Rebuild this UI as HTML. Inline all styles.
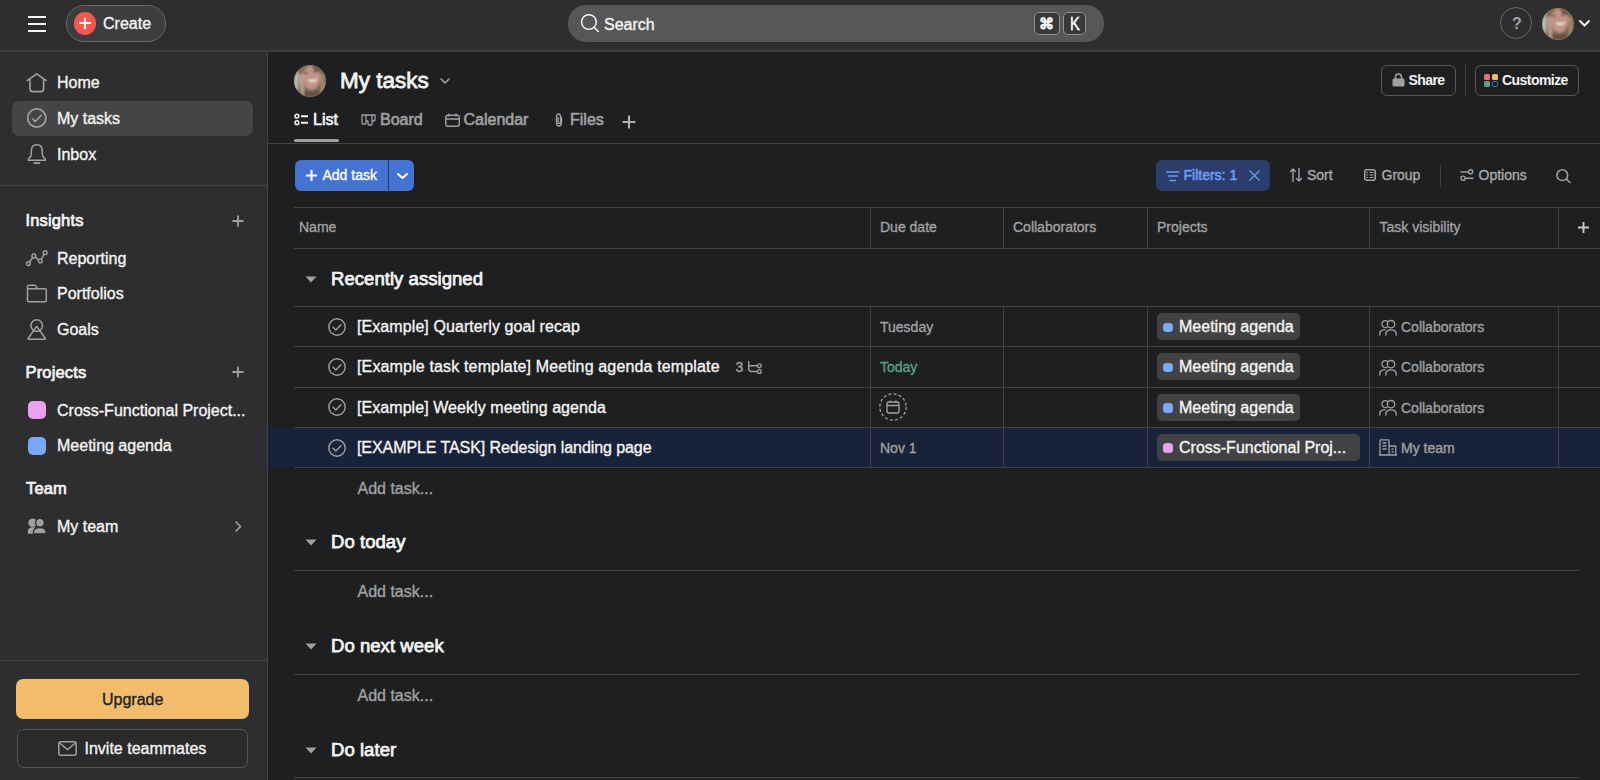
<!DOCTYPE html>
<html><head><meta charset="utf-8">
<style>
*{box-sizing:border-box;margin:0;padding:0}
html,body{width:1600px;height:780px;overflow:hidden;background:#1e1f21;font-family:"Liberation Sans",sans-serif;color:#f5f4f3}
.a{position:absolute}
.t{position:absolute;line-height:1;white-space:nowrap;-webkit-text-stroke:0.35px currentColor}
.b{font-weight:700}
.g{color:#a2a0a2}
#top{left:0;top:0;width:1600px;height:51px;background:#2e2e30}
#topline{left:0;top:50px;width:1600px;height:2px;background:#3c3c3e}
#side{left:0;top:52px;width:267px;height:728px;background:#2e2e30}
#sideline{left:267px;top:52px;width:1px;height:728px;background:#424244}
.hl{background:#424244}
.ln{position:absolute;height:1px;background:#424244}
.vl{position:absolute;width:1px;background:#424244}
svg{position:absolute;overflow:visible}
</style></head><body>
<!-- TOP BAR -->
<div id="top" class="a"></div>
<div id="topline" class="a"></div>
<!-- hamburger -->
<div class="a" style="left:28px;top:16px;width:18px;height:2px;background:#f5f4f3"></div>
<div class="a" style="left:28px;top:22.5px;width:18px;height:2px;background:#f5f4f3"></div>
<div class="a" style="left:28px;top:29.5px;width:18px;height:2px;background:#f5f4f3"></div>
<!-- create -->
<div class="a" style="left:66px;top:5px;width:99.5px;height:36.5px;border-radius:18px;background:#3d3d3f;border:1.5px solid #68676a"></div>
<div class="a" style="left:73.5px;top:12px;width:22.5px;height:22.5px;border-radius:50%;background:#f25a4f"></div>
<div class="a" style="left:79px;top:22.3px;width:11.5px;height:2px;background:#fff"></div>
<div class="a" style="left:83.8px;top:17.5px;width:2px;height:11.5px;background:#fff"></div>
<div class="t" style="left:103px;top:16.45px;font-size:16px">Create</div>
<!-- search -->
<div class="a" style="left:568px;top:5px;width:536px;height:36.5px;border-radius:18px;background:#575658"></div>
<svg style="left:580px;top:13px" width="20" height="20" viewBox="0 0 20 20"><circle cx="8.9" cy="9" r="7.3" fill="none" stroke="#f5f4f3" stroke-width="1.5"/><path d="M14 14.3 L18.3 18.5" stroke="#f5f4f3" stroke-width="1.6" stroke-linecap="round"/></svg>
<div class="t" style="left:604px;top:16.70px;font-size:16px">Search</div>
<div class="a" style="left:1034px;top:12px;width:25.5px;height:23px;border-radius:5px;background:#39393b;border:1.7px solid #929193"></div>
<div class="t" style="left:1039px;top:15.5px;font-size:15px;font-weight:700;width:15px;text-align:center">&#8984;</div>
<div class="a" style="left:1063px;top:12px;width:23px;height:23px;border-radius:5px;background:#39393b;border:1.7px solid #929193"></div>
<div class="t" style="left:1070.3px;top:15px;font-size:18px;transform:scaleX(0.82);transform-origin:0 0;-webkit-text-stroke:0.7px #f5f4f3">K</div>
<!-- help -->
<div class="a" style="left:1500px;top:7px;width:32px;height:32px;border-radius:50%;border:1.5px solid #6a696b"></div>
<div class="t g b" style="left:1512px;top:16px;font-size:16px;-webkit-text-stroke:0">?</div>
<!-- avatar top -->
<svg id="av1" style="left:1542px;top:7.5px" width="32" height="32" viewBox="0 0 32 32"><use href="#avatar"/></svg>
<svg style="left:1579px;top:20px" width="11" height="7" viewBox="0 0 11 7"><path d="M1 1 L5.5 5.5 L10 1" fill="none" stroke="#f5f4f3" stroke-width="2" stroke-linecap="round" stroke-linejoin="round"/></svg>

<!-- SIDEBAR -->
<div id="side" class="a"></div>
<div id="sideline" class="a"></div>
<div class="a hl" style="left:12px;top:101px;width:241px;height:35px;border-radius:7px;background:#454547"></div>
<!-- home icon -->
<svg style="left:26px;top:73px" width="22" height="20" viewBox="0 0 22 20"><path d="M1.2 7.6 L10.7 0.8 L20.2 7.6 M4 6 V15.5 Q4 18.6 7 18.6 H14.6 Q17.6 18.6 17.6 15.5 V6" fill="none" stroke="#a2a0a2" stroke-width="1.6" stroke-linejoin="round" stroke-linecap="round"/></svg>
<div class="t" style="left:57px;top:75px;font-size:16px">Home</div>
<svg style="left:27px;top:108.3px" width="20" height="20" viewBox="0 0 20 20"><circle cx="9.8" cy="10" r="9.1" fill="none" stroke="#a2a0a2" stroke-width="1.7"/><path d="M5.5 10.8 L8.3 13.6 L14.2 7.2" fill="none" stroke="#a2a0a2" stroke-width="1.5" stroke-linecap="round" stroke-linejoin="round"/></svg>
<div class="t" style="left:57px;top:111px;font-size:16px">My tasks</div>
<svg style="left:27px;top:143.5px" width="20" height="21" viewBox="0 0 20 21"><path d="M1.3 16.2 Q1 15 2.2 14.2 Q4.3 12.6 4.3 9.5 V7.5 Q4.3 0.8 9.8 0.8 Q15.3 0.8 15.3 7.5 V9.5 Q15.3 12.6 17.4 14.2 Q18.6 15 18.3 16.2 Z" fill="none" stroke="#a2a0a2" stroke-width="1.5" stroke-linejoin="round"/><path d="M7.3 19.2 H12.3" stroke="#a2a0a2" stroke-width="1.8" stroke-linecap="round"/></svg>
<div class="t" style="left:57px;top:147px;font-size:16px">Inbox</div>
<div class="ln" style="left:0;top:185px;width:267px"></div>

<div class="t b" style="left:25.5px;top:212px;font-size:16.5px;letter-spacing:0.15px;font-weight:400;-webkit-text-stroke:0.7px currentColor">Insights</div>
<svg style="left:232px;top:214.5px" width="12" height="12" viewBox="0 0 12 12"><path d="M6 0.5 V11.5 M0.5 6 H11.5" stroke="#a2a0a2" stroke-width="1.8"/></svg>
<svg style="left:26px;top:250px" width="22" height="16" viewBox="0 0 22 16"><path d="M3.5 12 L6.8 7.4 M9.2 7.3 L13.1 10.1 M15.3 9.4 L18.1 4.2" fill="none" stroke="#a2a0a2" stroke-width="1.5"/><circle cx="2.4" cy="13.6" r="1.9" fill="none" stroke="#a2a0a2" stroke-width="1.4"/><circle cx="7.9" cy="5.9" r="1.9" fill="none" stroke="#a2a0a2" stroke-width="1.4"/><circle cx="14.3" cy="11" r="1.9" fill="none" stroke="#a2a0a2" stroke-width="1.4"/><circle cx="19.1" cy="2.7" r="1.9" fill="none" stroke="#a2a0a2" stroke-width="1.4"/></svg>
<div class="t" style="left:57px;top:251.15px;font-size:16px">Reporting</div>
<svg style="left:26px;top:284px" width="22" height="19" viewBox="0 0 22 19"><path d="M1.5 16.5 V2.5 Q1.5 1.2 2.8 1.2 H8.6 Q9.3 1.2 9.8 1.9 L11.5 4.8 H19 Q20.3 4.8 20.3 6.1 V16.5 Q20.3 17.8 19 17.8 H2.8 Q1.5 17.8 1.5 16.5 Z M1.5 4.8 H11.5" fill="none" stroke="#a2a0a2" stroke-width="1.5" stroke-linejoin="round"/></svg>
<div class="t" style="left:57px;top:286px;font-size:16px">Portfolios</div>
<svg style="left:27px;top:318.5px" width="20" height="22" viewBox="0 0 20 22"><circle cx="9.7" cy="6.6" r="5.8" fill="none" stroke="#a2a0a2" stroke-width="1.5"/><path d="M9.7 7.4 L1.3 19 Q0.6 20.3 2.1 20.3 H17.3 Q18.8 20.3 18.1 19 Z" fill="none" stroke="#a2a0a2" stroke-width="1.5" stroke-linejoin="round"/></svg>
<div class="t" style="left:57px;top:322.35px;font-size:16px">Goals</div>

<div class="t b" style="left:25.5px;top:364px;font-size:16.5px;letter-spacing:0.15px;font-weight:400;-webkit-text-stroke:0.7px currentColor">Projects</div>
<svg style="left:232px;top:366px" width="12" height="12" viewBox="0 0 12 12"><path d="M6 0.5 V11.5 M0.5 6 H11.5" stroke="#a2a0a2" stroke-width="1.8"/></svg>
<div class="a" style="left:28px;top:401px;width:18px;height:18px;border-radius:5px;background:#e8a2ee"></div>
<div class="t" style="left:57px;top:403.05px;font-size:16px">Cross-Functional Project...</div>
<div class="a" style="left:28px;top:437px;width:18px;height:18px;border-radius:5px;background:#78a8f8"></div>
<div class="t" style="left:57px;top:438px;font-size:16px">Meeting agenda</div>

<div class="t b" style="left:26px;top:480.4px;font-size:16.5px;letter-spacing:0.15px;font-weight:400;-webkit-text-stroke:0.7px currentColor">Team</div>
<svg style="left:27px;top:517px" width="21" height="18" viewBox="0 0 21 18"><circle cx="5.6" cy="5.7" r="4.3" fill="#a2a0a2"/><path d="M0.8 16.8 V15 Q0.8 10.2 5.6 10.2 Q8.5 10.2 10 11.5 V16.8 Z" fill="#a2a0a2"/><circle cx="12.9" cy="5.7" r="4.3" fill="#a2a0a2" stroke="#2e2e30" stroke-width="1.3"/><path d="M6.5 16.8 V15.3 Q6.5 10.6 12.9 10.6 Q19.1 10.6 19.1 15.3 V16.8 Z" fill="#a2a0a2" stroke="#2e2e30" stroke-width="1.3"/></svg>
<div class="t" style="left:57px;top:518.95px;font-size:16px">My team</div>
<svg style="left:234.5px;top:521px" width="7" height="11" viewBox="0 0 7 11"><path d="M1 1 L5.5 5.5 L1 10" fill="none" stroke="#a2a0a2" stroke-width="1.6" stroke-linecap="round" stroke-linejoin="round"/></svg>

<div class="ln" style="left:0;top:660px;width:267px"></div>
<div class="a" style="left:16px;top:679px;width:233px;height:40px;border-radius:7px;background:#f1bd6c"></div>
<div class="t" style="left:102px;top:692.20px;font-size:16px;color:#1e1f21">Upgrade</div>
<div class="a" style="left:17px;top:728.5px;width:231px;height:39.5px;border-radius:7px;border:1px solid #545456;background:#2a2a2c"></div>
<svg style="left:58px;top:741px" width="19" height="15" viewBox="0 0 19 15"><rect x="0.8" y="0.8" width="17.4" height="13.4" rx="2" fill="none" stroke="#a2a0a2" stroke-width="1.5"/><path d="M1.5 2 L9.5 8.5 L17.5 2" fill="none" stroke="#a2a0a2" stroke-width="1.5"/></svg>
<div class="t" style="left:84.5px;top:741px;font-size:16px">Invite teammates</div>

<!-- MAIN HEADER -->
<svg style="left:294px;top:64.5px" width="32" height="32" viewBox="0 0 32 32"><use href="#avatar"/></svg>
<div class="t b" style="left:340px;top:70px;font-size:22.5px;letter-spacing:0px;font-weight:400;-webkit-text-stroke:0.8px currentColor">My tasks</div>
<svg style="left:439.5px;top:77.5px" width="10" height="6" viewBox="0 0 10 6"><path d="M1 1 L5 5 L9 1" fill="none" stroke="#a2a0a2" stroke-width="1.6" stroke-linecap="round" stroke-linejoin="round"/></svg>

<div class="a" style="left:1380.5px;top:65px;width:75px;height:31px;border-radius:6px;border:1px solid #565557"></div>
<svg style="left:1391.5px;top:73px" width="13" height="14" viewBox="0 0 13 14"><path d="M3.5 6 V4.5 Q3.5 1 6.5 1 Q9.5 1 9.5 4.5 V6" fill="none" stroke="#a2a0a2" stroke-width="1.6"/><rect x="0.5" y="5.5" width="12" height="8" rx="1.5" fill="#a2a0a2"/></svg>
<div class="t b" style="left:1408.5px;top:73px;font-size:14px;letter-spacing:-0.6px;-webkit-text-stroke:0">Share</div>
<div class="vl" style="left:1465px;top:65px;height:31px"></div>
<div class="a" style="left:1474.5px;top:65px;width:104px;height:31px;border-radius:6px;border:1px solid #565557"></div>
<div class="a" style="left:1484px;top:73.5px;width:6px;height:6px;border-radius:1.5px;background:#f06a6a"></div>
<div class="a" style="left:1492px;top:73.5px;width:6px;height:6px;border-radius:1.5px;background:#f1bd6c"></div>
<div class="a" style="left:1484px;top:81px;width:6px;height:6px;border-radius:1.5px;background:#5da283"></div>
<div class="a" style="left:1492px;top:81px;width:6px;height:6px;border-radius:1.5px;border:1.5px solid #4573d2"></div>
<div class="t b" style="left:1502px;top:73px;font-size:14px;letter-spacing:-0.55px;-webkit-text-stroke:0">Customize</div>

<!-- tabs -->
<svg style="left:294px;top:114px" width="15" height="11" viewBox="0 0 15 11"><circle cx="2.9" cy="2.2" r="1.9" fill="none" stroke="#f5f4f3" stroke-width="1.5"/><circle cx="2.9" cy="8.7" r="1.9" fill="none" stroke="#f5f4f3" stroke-width="1.5"/><path d="M7 2.2 H14 M7 8.7 H14" stroke="#f5f4f3" stroke-width="1.9"/></svg>
<div class="t" style="left:313px;top:112.45px;font-size:16px;-webkit-text-stroke:0.65px currentColor">List</div>
<div class="a" style="left:294px;top:139px;width:45px;height:3px;border-radius:1.5px;background:#a2a0a2"></div>
<svg style="left:361px;top:113.5px" width="15" height="12" viewBox="0 0 15 12"><path d="M1 1 H14 V6 Q14 7 13 7 H11 V10 Q11 11 10 11 H8 Q7 11 7 10 V7 H5 V9 Q5 10 4 10 H2 Q1 10 1 9 Z M5 1 V7 M11 1 V7" fill="none" stroke="#a2a0a2" stroke-width="1.3" stroke-linejoin="round"/></svg>
<div class="t g" style="left:380px;top:112.45px;font-size:16px;-webkit-text-stroke:0.6px currentColor">Board</div>
<svg style="left:444.5px;top:112.5px" width="15" height="14" viewBox="0 0 15 14"><rect x="0.8" y="2.3" width="13.4" height="11" rx="2" fill="none" stroke="#a2a0a2" stroke-width="1.4"/><path d="M0.8 6 H14.2 M4 0.5 V3.5 M11 0.5 V3.5" stroke="#a2a0a2" stroke-width="1.4"/></svg>
<div class="t g" style="left:463.5px;top:112.45px;font-size:16px;-webkit-text-stroke:0.6px currentColor">Calendar</div>
<svg style="left:553.5px;top:112.5px" width="10" height="14" viewBox="0 0 10 14"><path d="M7.5 4.5 V10 Q7.5 13 5 13 Q2.5 13 2.5 10 V3.5 Q2.5 1 4.5 1 Q6.5 1 6.5 3.5 V9.5 Q6.5 10.5 5 10.5 Q4 10.5 4 9.5 V4.5" fill="none" stroke="#a2a0a2" stroke-width="1.3" stroke-linecap="round"/></svg>
<div class="t g" style="left:570px;top:112.45px;font-size:16px;-webkit-text-stroke:0.6px currentColor">Files</div>
<svg style="left:621.5px;top:115px" width="14" height="14" viewBox="0 0 14 14"><path d="M7 0.5 V13.5 M0.5 7 H13.5" stroke="#b0aeb0" stroke-width="2.1"/></svg>
<div class="ln" style="left:268px;top:143px;width:1332px"></div>

<!-- toolbar -->
<div class="a" style="left:294.5px;top:159.5px;width:119px;height:31.5px;border-radius:6px;background:#4573d2"></div>
<div class="a" style="left:387.5px;top:159.5px;width:1px;height:31.5px;background:#1e1f21;opacity:.7"></div>
<svg style="left:306px;top:169.5px" width="11" height="11" viewBox="0 0 11 11"><path d="M5.5 0 V11 M0 5.5 H11" stroke="#fff" stroke-width="2.1"/></svg>
<div class="t" style="left:322.5px;top:168px;font-size:14px;color:#fff">Add task</div>
<svg style="left:396.5px;top:172.5px" width="11" height="6" viewBox="0 0 11 6"><path d="M1 1 L5.5 5 L10 1" fill="none" stroke="#fff" stroke-width="2" stroke-linecap="round" stroke-linejoin="round"/></svg>

<div class="a" style="left:1155.5px;top:159.5px;width:114.5px;height:31.5px;border-radius:6px;background:#2c3d6b"></div>
<svg style="left:1165.5px;top:170.5px" width="14" height="11" viewBox="0 0 14 11"><path d="M0.3 1 H13.5 M2 5 H11.8 M3.5 9.5 H10" stroke="#6a9bf7" stroke-width="1.3"/></svg>
<div class="t" style="left:1183.5px;top:168px;font-size:14px;color:#6d9ef8;-webkit-text-stroke:0.55px #6d9ef8">Filters: 1</div>
<svg style="left:1248.5px;top:170px" width="11" height="11" viewBox="0 0 11 11"><path d="M0.5 0.5 L10.5 10.5 M10.5 0.5 L0.5 10.5" stroke="#6d9ef8" stroke-width="1.2"/></svg>

<svg style="left:1290px;top:168px" width="12" height="14" viewBox="0 0 12 14"><path d="M3 13.5 V1 M0.5 3.5 L3 1 L5.5 3.5 M9 0.5 V13 M6.5 10.5 L9 13 L11.5 10.5" fill="none" stroke="#a2a0a2" stroke-width="1.4" stroke-linecap="round" stroke-linejoin="round"/></svg>
<div class="t" style="left:1307px;top:168px;font-size:14px;color:#aba9ab">Sort</div>
<svg style="left:1364px;top:169px" width="12" height="12" viewBox="0 0 12 12"><rect x="0.75" y="0.75" width="10.5" height="10.5" rx="2" fill="none" stroke="#a2a0a2" stroke-width="1.5"/><path d="M2.5 3.5 H4 M5.5 3.5 H9.5 M2.5 6 H4 M5.5 6 H9.5 M2.5 8.5 H4 M5.5 8.5 H9.5" stroke="#a2a0a2" stroke-width="1"/></svg>
<div class="t" style="left:1381.5px;top:168px;font-size:14px;color:#aba9ab">Group</div>
<div class="vl" style="left:1440px;top:164.5px;height:22px"></div>
<svg style="left:1460px;top:169px" width="14" height="12" viewBox="0 0 14 12"><path d="M0.5 3 H8 M5.5 9.2 H13.5" stroke="#a2a0a2" stroke-width="1.4"/><circle cx="10.6" cy="2.8" r="2.1" fill="none" stroke="#a2a0a2" stroke-width="1.4"/><circle cx="3" cy="9.2" r="2.1" fill="none" stroke="#a2a0a2" stroke-width="1.4"/></svg>
<div class="t" style="left:1478.5px;top:168px;font-size:14px;color:#aba9ab">Options</div>
<svg style="left:1556px;top:169px" width="15" height="14" viewBox="0 0 15 14"><circle cx="6.3" cy="6.2" r="5.4" fill="none" stroke="#a2a0a2" stroke-width="1.5"/><path d="M10.2 10.2 L14 13.5" stroke="#a2a0a2" stroke-width="1.6" stroke-linecap="round"/></svg>

<!-- TABLE HEADER -->
<div class="ln" style="left:294px;top:206.5px;width:1306px;height:1.2px"></div>
<div class="ln" style="left:294px;top:248px;width:1306px"></div>
<div class="vl" style="left:870px;top:207px;height:41px"></div>
<div class="vl" style="left:1003px;top:207px;height:41px"></div>
<div class="vl" style="left:1147px;top:207px;height:41px"></div>
<div class="vl" style="left:1369px;top:207px;height:41px"></div>
<div class="vl" style="left:1558px;top:207px;height:41px"></div>
<div class="t g" style="left:299px;top:220px;font-size:14px">Name</div>
<div class="t g" style="left:880px;top:220px;font-size:14px">Due date</div>
<div class="t g" style="left:1013px;top:220px;font-size:14px">Collaborators</div>
<div class="t g" style="left:1157px;top:220px;font-size:14px">Projects</div>
<div class="t g" style="left:1379.5px;top:220px;font-size:14px">Task visibility</div>
<svg style="left:1577.7px;top:222px" width="11" height="11" viewBox="0 0 11 11"><path d="M5.5 0 V11 M0 5.5 H11" stroke="#c8c6c8" stroke-width="1.9"/></svg>

<!-- SECTION: Recently assigned -->
<svg style="left:304.5px;top:275.5px" width="12" height="7" viewBox="0 0 12 7"><path d="M0.5 0.5 H11.5 L6 6.5 Z" fill="#a2a0a2"/></svg>
<div class="t b" style="left:331px;top:270px;font-size:18.5px;letter-spacing:0.05px;font-weight:400;-webkit-text-stroke:0.75px currentColor">Recently assigned</div>
<div class="ln" style="left:294px;top:306px;width:1306px"></div>

<!-- selected row bg -->
<div class="a" style="left:268px;top:427px;width:1332px;height:40px;background:#182239"></div>

<div class="ln" style="left:294px;top:346px;width:1306px"></div>
<div class="ln" style="left:294px;top:387px;width:1306px"></div>
<div class="ln" style="left:294px;top:427px;width:1306px"></div>
<div class="ln" style="left:294px;top:467px;width:1306px"></div>
<div class="vl" style="left:870px;top:307px;height:160px"></div>
<div class="vl" style="left:1003px;top:307px;height:160px"></div>
<div class="vl" style="left:1147px;top:307px;height:160px"></div>
<div class="vl" style="left:1369px;top:307px;height:160px"></div>
<div class="vl" style="left:1558px;top:307px;height:160px"></div>

<!-- row 1 -->
<svg style="left:328px;top:318px" width="18" height="18" viewBox="0 0 18 18"><circle cx="9" cy="9" r="8.2" fill="none" stroke="#a2a0a2" stroke-width="1.4"/><path d="M5 9.3 L7.8 12 L13 6.8" fill="none" stroke="#a2a0a2" stroke-width="1.4" stroke-linecap="round" stroke-linejoin="round"/></svg>
<div class="t" style="left:357px;top:319px;font-size:16px;letter-spacing:0.083px">[Example] Quarterly goal recap</div>
<div class="t g" style="left:880px;top:320px;font-size:14px">Tuesday</div>
<div class="a" style="left:1157px;top:313px;width:143px;height:27px;border-radius:5px;background:#424244"></div>
<div class="a" style="left:1163px;top:322.5px;width:9.5px;height:9.5px;border-radius:3.5px;background:#78a8f8"></div>
<div class="t" style="left:1179px;top:319px;font-size:16px">Meeting agenda</div>
<svg class="collab" style="left:1379px;top:319px" width="18" height="17" viewBox="0 0 18 17"><use href="#collab"/></svg>
<div class="t g" style="left:1401px;top:320px;font-size:14px">Collaborators</div>

<!-- row 2 -->
<svg style="left:328px;top:358px" width="18" height="18" viewBox="0 0 18 18"><use href="#check"/></svg>
<div class="t" style="left:357px;top:359.2px;font-size:16px;letter-spacing:0.148px">[Example task template] Meeting agenda template</div>
<div class="t g" style="left:735.5px;top:360px;font-size:14px">3</div>
<svg style="left:747px;top:361px" width="16" height="13" viewBox="0 0 16 13"><path d="M1.7 0.8 V7.5 Q1.7 10.5 4.7 10.5 H10.4 M1.7 4.7 H10.4" fill="none" stroke="#a2a0a2" stroke-width="1.4" stroke-linecap="round"/><circle cx="12.4" cy="4.7" r="1.9" fill="none" stroke="#a2a0a2" stroke-width="1.3"/><circle cx="12.4" cy="10.5" r="1.9" fill="none" stroke="#a2a0a2" stroke-width="1.3"/></svg>
<div class="t" style="left:880px;top:360px;font-size:14px;color:#58a182">Today</div>
<div class="a" style="left:1157px;top:353.25px;width:143px;height:27px;border-radius:5px;background:#424244"></div>
<div class="a" style="left:1163px;top:362.75px;width:9.5px;height:9.5px;border-radius:3.5px;background:#78a8f8"></div>
<div class="t" style="left:1179px;top:359.2px;font-size:16px">Meeting agenda</div>
<svg style="left:1379px;top:359px" width="18" height="17" viewBox="0 0 18 17"><use href="#collab"/></svg>
<div class="t g" style="left:1401px;top:360px;font-size:14px">Collaborators</div>

<!-- row 3 -->
<svg style="left:328px;top:398px" width="18" height="18" viewBox="0 0 18 18"><use href="#check"/></svg>
<div class="t" style="left:357px;top:399.6px;font-size:16px;letter-spacing:0.063px">[Example] Weekly meeting agenda</div>
<svg style="left:879px;top:393.3px" width="28" height="28" viewBox="0 0 28 28"><circle cx="14" cy="14" r="13.2" fill="none" stroke="#a2a0a2" stroke-width="1.3" stroke-dasharray="3 2.2"/><rect x="8" y="9" width="12" height="11" rx="2" fill="none" stroke="#a2a0a2" stroke-width="1.3"/><path d="M8 12.5 H20 M11 7.5 V10 M17 7.5 V10" stroke="#a2a0a2" stroke-width="1.3"/></svg>
<div class="a" style="left:1157px;top:393.5px;width:143px;height:27px;border-radius:5px;background:#424244"></div>
<div class="a" style="left:1163px;top:403px;width:9.5px;height:9.5px;border-radius:3.5px;background:#78a8f8"></div>
<div class="t" style="left:1179px;top:399.6px;font-size:16px">Meeting agenda</div>
<svg style="left:1379px;top:399px" width="18" height="17" viewBox="0 0 18 17"><use href="#collab"/></svg>
<div class="t g" style="left:1401px;top:401.1px;font-size:14px">Collaborators</div>

<!-- row 4 -->
<svg style="left:328px;top:438.5px" width="18" height="18" viewBox="0 0 18 18"><use href="#check"/></svg>
<div class="t" style="left:357px;top:439.6px;font-size:16px;letter-spacing:-0.08px">[EXAMPLE TASK] Redesign landing page</div>
<div class="t g" style="left:880px;top:441.35px;font-size:14px">Nov 1</div>
<div class="a" style="left:1157px;top:433.75px;width:203px;height:27px;border-radius:5px;background:#424244"></div>
<div class="a" style="left:1163px;top:443.25px;width:9.5px;height:9.5px;border-radius:3.5px;background:#e8a2ee"></div>
<div class="t" style="left:1179px;top:439.6px;font-size:16px">Cross-Functional Proj...</div>
<svg style="left:1379px;top:439px" width="18" height="17" viewBox="0 0 18 17"><path d="M1 16 V1.5 Q1 0.8 1.7 0.8 H9.3 Q10 0.8 10 1.5 V16 M10 7 H16 Q16.8 7 16.8 7.8 V16 M0 16 H18 M3.5 4 H7.5 M3.5 7 H7.5 M3.5 10 H7.5 M12.5 10 H14.5 M12.5 13 H14.5" fill="none" stroke="#a2a0a2" stroke-width="1.3"/></svg>
<div class="t g" style="left:1401px;top:441.35px;font-size:14px">My team</div>

<div class="t g" style="left:357.5px;top:481px;font-size:16px">Add task...</div>

<!-- Do today -->
<svg style="left:304.5px;top:539px" width="12" height="7" viewBox="0 0 12 7"><path d="M0.5 0.5 H11.5 L6 6.5 Z" fill="#a2a0a2"/></svg>
<div class="t b" style="left:331px;top:533px;font-size:18.5px;letter-spacing:0.05px;font-weight:400;-webkit-text-stroke:0.75px currentColor">Do today</div>
<div class="ln" style="left:294px;top:570px;width:1285px"></div>
<div class="t g" style="left:357.5px;top:584px;font-size:16px">Add task...</div>

<svg style="left:304.5px;top:642.5px" width="12" height="7" viewBox="0 0 12 7"><path d="M0.5 0.5 H11.5 L6 6.5 Z" fill="#a2a0a2"/></svg>
<div class="t b" style="left:331px;top:637px;font-size:18.5px;letter-spacing:0.05px;font-weight:400;-webkit-text-stroke:0.75px currentColor">Do next week</div>
<div class="ln" style="left:294px;top:674px;width:1285px"></div>
<div class="t g" style="left:357.5px;top:688px;font-size:16px">Add task...</div>

<svg style="left:304.5px;top:746.5px" width="12" height="7" viewBox="0 0 12 7"><path d="M0.5 0.5 H11.5 L6 6.5 Z" fill="#a2a0a2"/></svg>
<div class="t b" style="left:331px;top:741px;font-size:18.5px;letter-spacing:0.05px;font-weight:400;-webkit-text-stroke:0.75px currentColor">Do later</div>
<div class="ln" style="left:294px;top:777px;width:1285px"></div>

<!-- defs -->
<svg width="0" height="0" style="position:absolute;left:0;top:0">
<defs>
<symbol id="check" viewBox="0 0 18 18"><circle cx="9" cy="9" r="8.2" fill="none" stroke="#a2a0a2" stroke-width="1.4"/><path d="M5 9.3 L7.8 12 L13 6.8" fill="none" stroke="#a2a0a2" stroke-width="1.4" stroke-linecap="round" stroke-linejoin="round"/></symbol>
<symbol id="collab" viewBox="0 0 18 17"><g fill="none" stroke="#a2a0a2" stroke-width="1.35" stroke-linecap="round"><circle cx="12" cy="5.2" r="3.7"/><path d="M6.8 16 V15 Q6.8 10.8 12 10.8 Q17.2 10.8 17.2 15 V16"/><path d="M8.4 2.2 A3.5 3.5 0 1 0 7.9 8.3"/><path d="M0.8 16 V15 Q0.8 11 4.8 10.8 H6"/></g></symbol>
<symbol id="avatar" viewBox="0 0 32 32">
<clipPath id="avc"><circle cx="16" cy="16" r="16"/></clipPath>
<filter id="avb" x="-10%" y="-10%" width="120%" height="120%"><feGaussianBlur stdDeviation="0.8"/></filter>
<g clip-path="url(#avc)"><g filter="url(#avb)">
<rect x="-2" y="-2" width="36" height="36" fill="#7f6a5a"/>
<rect x="-2" y="5" width="6" height="20" fill="#b4bab6"/>
<path d="M4 10 Q5 22 9 32 L12 32 Q9 20 9 8 Z" fill="#b3a08a"/>
<path d="M26 8 Q28 20 27 32 L30 32 Q31 20 29 8 Z" fill="#a48d78"/>
<ellipse cx="17.5" cy="12.5" rx="8.8" ry="12" fill="#c39488"/>
<path d="M17 -1 Q27 0 29 11 Q25 6 20 5 Z" fill="#6f5849"/>
<ellipse cx="12" cy="7.8" rx="2" ry="0.9" fill="#4a3530"/>
<ellipse cx="21" cy="6.6" rx="2" ry="0.9" fill="#4a3530"/>
<path d="M14 15 Q18.5 18 23 14.5 Q18.5 16 14 15 Z" fill="#f3eee9" stroke="#f3eee9" stroke-width="1.1"/>
<path d="M10 25 Q17 29 25 24 L25 34 H10 Z" fill="#6a5044"/>
</g></g>
<circle cx="16" cy="16" r="15.75" fill="none" stroke="#9a7f55" stroke-width="0.5"/>
</symbol>
</defs></svg>
</body></html>
